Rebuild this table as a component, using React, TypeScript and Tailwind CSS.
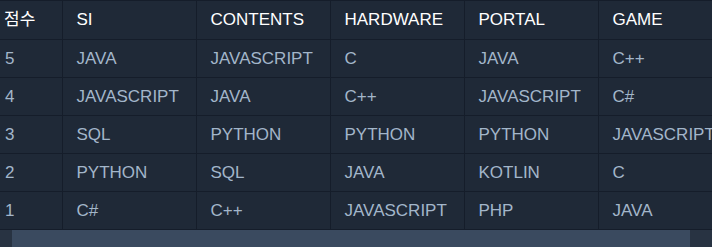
import React from "react";

const columns = ["SI", "CONTENTS", "HARDWARE", "PORTAL", "GAME"];

const rows = [
  { score: 5, langs: ["JAVA", "JAVASCRIPT", "C", "JAVA", "C++"] },
  { score: 4, langs: ["JAVASCRIPT", "JAVA", "C++", "JAVASCRIPT", "C#"] },
  { score: 3, langs: ["SQL", "PYTHON", "PYTHON", "PYTHON", "JAVASCRIPT"] },
  { score: 2, langs: ["PYTHON", "SQL", "JAVA", "KOTLIN", "C"] },
  { score: 1, langs: ["C#", "C++", "JAVASCRIPT", "PHP", "JAVA"] },
];

export default function App() {
  return (
    <div
      className="w-[712px] h-[247px] bg-[#1f2937] flex flex-col overflow-hidden"
      style={{ fontFamily: '"Liberation Sans", "Noto Sans CJK KR", sans-serif' }}
    >
      {/* Table */}
      <div className="overflow-hidden">
        <table className="table-fixed border-collapse w-[732px] text-[17px]">
          <colgroup>
            <col className="w-[62px]" />
            {columns.map((c) => (
              <col key={c} className="w-[134px]" />
            ))}
          </colgroup>
          <thead>
            <tr className="h-[39px] border-t border-b border-[#151d2a]">
              <th className="pl-[4px] text-left font-normal text-white border-r border-[#151d2a]">
                점수
              </th>
              {columns.map((c) => (
                <th
                  key={c}
                  className="pl-[14px] text-left font-normal text-white border-r border-[#151d2a]"
                >
                  {c}
                </th>
              ))}
            </tr>
          </thead>
          <tbody>
            {rows.map((r) => (
              <tr key={r.score} className="h-[38px] border-b border-[#151d2a]">
                <td className="pl-[5px] text-[#a3b6ca] border-r border-[#151d2a]">{r.score}</td>
                {r.langs.map((l, i) => (
                  <td
                    key={i}
                    className="pl-[14px] text-[#a3b6ca] whitespace-nowrap overflow-hidden border-r border-[#151d2a]"
                  >
                    {l}
                  </td>
                ))}
              </tr>
            ))}
          </tbody>
        </table>
      </div>

      {/* Scrollbar */}
      <div className="flex flex-1 bg-[#283342]">
        <div className="w-[12px]" />
        <div className="w-[678px] bg-[#3a4a5f]" />
      </div>
    </div>
  );
}
